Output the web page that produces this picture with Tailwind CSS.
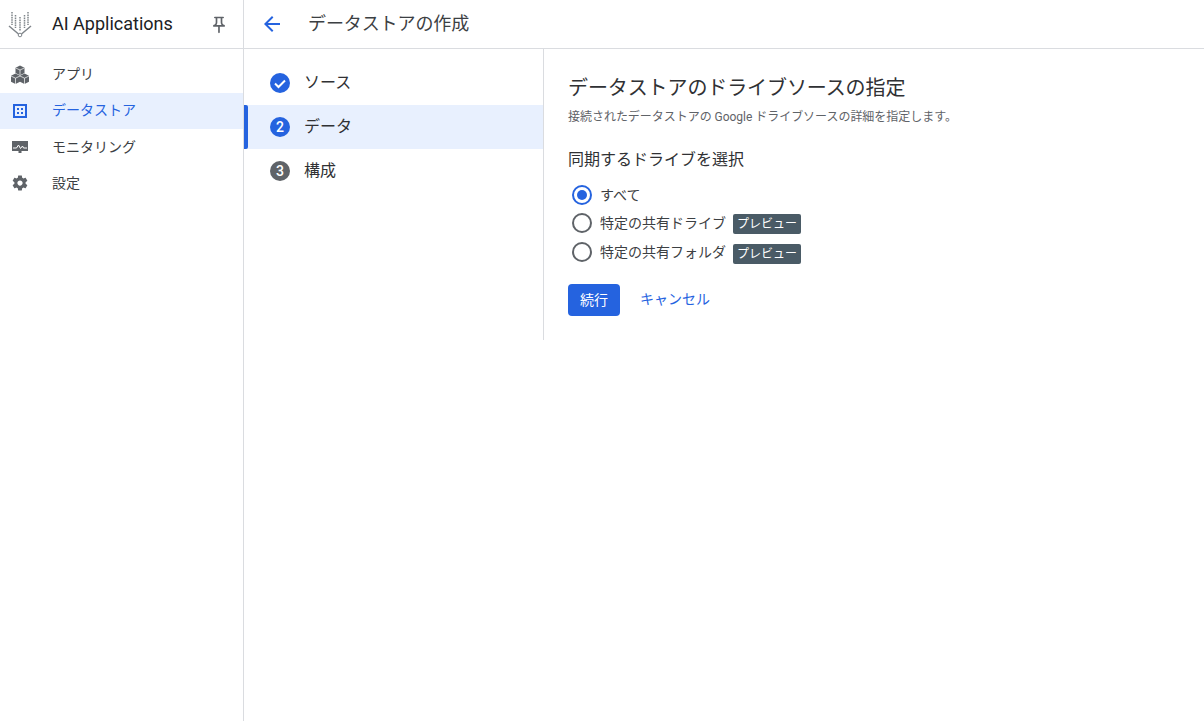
<!DOCTYPE html>
<html lang="ja">
<head>
    <meta charset="UTF-8">
    <title>データストアの作成</title>
    <script src="https://cdn.jsdelivr.net/npm/@tailwindcss/browser@4"></script>
</head>
<body class="bg-white h-[721px] overflow-hidden flex font-['Roboto','Noto_Sans_CJK_JP',sans-serif] text-[#303134]">
    <!-- サイドバー -->
    <aside class="w-[244px] h-full shrink-0 border-r border-[#dadce0]">
        <div class="h-[49px] border-b border-[#dadce0] flex items-center relative">
            <svg class="ml-[8px] w-[24px] h-[28px]" viewBox="0 0 24 28" fill="none">
                <g stroke="#80868b" stroke-width="1.500" stroke-dasharray="1.600 .8">
                    <path d="M4 2v13"/><path d="M7.500 5v13"/><path d="M12 7v14"/><path d="M16.500 5v13"/><path d="M20 2v13"/>
                </g>
                <path d="M1 16l9.500 8M23 16l-9.500 8" stroke="#80868b" stroke-width="1.500"/>
                <circle cx="12" cy="25" r="1.800" stroke="#80868b" stroke-width="1"/>
            </svg>
            <span class="ml-[20px] text-[18px] leading-none text-[#202124]">AI Applications</span>
            <svg class="absolute left-[209px] top-[15px] w-[20px] h-[20px]" viewBox="0 0 24 24" fill="#5f6368">
                <path d="M14 4v5c0 1.120.37 2.160 1 3H9c.65-.86 1-1.900 1-3V4h4m3-2H7c-.55 0-1 .45-1 1s.45 1 1 1h1v5c0 1.660-1.340 3-3 3v2h5.970v7l1 1 1-1v-7H19v-2c-1.660 0-3-1.340-3-3V4h1c.55 0 1-.45 1-1s-.45-1-1-1z"/>
            </svg>
        </div>
        <nav class="pt-[8px] text-[14px]">
            <a class="h-[36px] flex items-center text-[#3c4043]">
                <svg class="ml-[10px] w-[20px] h-[20px]" viewBox="0 0 20 20" fill="#5f6368">
                    <path d="M10 .5l4.500 2.200v5.300L10 10.200 5.500 8V2.700z"/><path d="M5.500 8.500l4.500 2.200v6L5.500 19 1 16.700v-6z"/><path d="M14.500 8.500l4.500 2.200v6L14.500 19 10 16.700v-6z"/>
                    <path d="M5.700 3l4.300 2 4.300-2M10 5v5M1 11l4.500 2.200L10 11M5.500 13.200V19M10 11l4.500 2.200L19 11M14.500 13.200V19" stroke="#fff" stroke-width=".7" fill="none"/>
                </svg>
                <span class="ml-[22px] -mt-[1px]">アプリ</span>
            </a>
            <a class="h-[36px] flex items-center bg-[#e8f0fe] text-[#2563df]">
                <svg class="ml-[13px] w-[14px] h-[14px]" viewBox="0 0 14 14" fill="#2563df">
                    <path fill-rule="evenodd" d="M0 0h14v14H0zM2 2v10h10V2z"/><path d="M4 4h2v2H4zM8 4h2v2H8zM4 8h2v2H4zM8 8h2v2H8z"/>
                </svg>
                <span class="ml-[25px] -mt-[1px]">データストア</span>
            </a>
            <a class="h-[36px] flex items-center text-[#3c4043]">
                <svg class="ml-[12px] w-[16px] h-[16px]" viewBox="0 0 16 16" fill="#5f6368">
                    <path d="M0 2h16v10H9.500v2h-3v-2H0z"/>
                    <path d="M1 9h3.500l2-3 2 3.500 2-2.500 1 2H15" stroke="#fff" stroke-width="1" fill="none"/>
                </svg>
                <span class="ml-[24px]">モニタリング</span>
            </a>
            <a class="h-[36px] flex items-center text-[#3c4043]">
                <svg class="ml-[11px] w-[18px] h-[18px]" viewBox="0 0 24 24" fill="#5f6368">
                    <path d="M19.430 12.980c.04-.32.07-.64.07-.98s-.03-.66-.07-.98l2.110-1.650c.19-.15.24-.42.12-.64l-2-3.460c-.12-.22-.39-.3-.61-.22l-2.490 1c-.52-.4-1.080-.73-1.690-.98l-.38-2.650C14.460 2.180 14.250 2 14 2h-4c-.25 0-.46.18-.49.42l-.38 2.650c-.61.25-1.170.59-1.690.98l-2.490-1c-.23-.09-.49 0-.61.22l-2 3.460c-.13.22-.07.49.12.64l2.110 1.650c-.04.32-.07.65-.07.98s.03.66.07.98l-2.110 1.650c-.19.15-.24.42-.12.64l2 3.460c.12.22.39.3.61.22l2.490-1c.52.4 1.080.73 1.690.98l.38 2.650c.03.24.24.42.49.42h4c.25 0 .46-.18.49-.42l.38-2.650c.61-.25 1.170-.59 1.690-.98l2.490 1c.23.09.49 0 .61-.22l2-3.460c.12-.22.07-.49-.12-.64l-2.110-1.650zM12 15.500c-1.930 0-3.500-1.570-3.500-3.500s1.570-3.500 3.500-3.500 3.500 1.570 3.500 3.500-1.570 3.500-3.500 3.500z"/>
                </svg>
                <span class="ml-[23px]">設定</span>
            </a>
        </nav>
    </aside>

    <main class="flex-1 min-w-0">
        <!-- ヘッダー -->
        <header class="h-[49px] border-b border-[#dadce0] flex items-center">
            <svg class="ml-[16px] w-[24px] h-[24px]" viewBox="0 0 24 24" fill="#2563df">
                <path d="M20 11H7.830l5.590-5.590L12 4l-8 8 8 8 1.410-1.410L7.830 13H20v-2z"/>
            </svg>
            <h1 class="ml-[24px] -mt-[2px] text-[18px] font-normal text-[#3c4043] tracking-[-0.1px]">データストアの作成</h1>
        </header>

        <div class="flex">
            <!-- ステップ -->
            <ol class="w-[300px] h-[291px] border-r border-[#dadce0] pt-[12px] text-[16px]">
                <li class="h-[44px] flex items-center pl-[26px]">
                    <svg class="w-[20px] h-[20px]" viewBox="0 0 20 20">
                        <circle cx="10" cy="10" r="10" fill="#2563df"/>
                        <path d="M5 10.500l3.500 3.500L15 7.500" stroke="#fff" stroke-width="2" fill="none"/>
                    </svg>
                    <span class="ml-[14px] -mt-[1px]">ソース</span>
                </li>
                <li class="h-[44px] flex items-center pl-[26px] bg-[#e8f0fe] relative">
                    <div class="absolute left-0 top-0 w-[4px] h-full bg-[#2563df] rounded-r-[2px]"></div>
                    <div class="w-[20px] h-[20px] rounded-full bg-[#2563df] text-white text-[14px] font-medium flex items-center justify-center">2</div>
                    <span class="ml-[14px] -mt-[1px]">データ</span>
                </li>
                <li class="h-[44px] flex items-center pl-[26px]">
                    <div class="w-[20px] h-[20px] rounded-full bg-[#5f6368] text-white text-[14px] font-medium flex items-center justify-center">3</div>
                    <span class="ml-[14px] -mt-[1px]">構成</span>
                </li>
            </ol>

            <!-- フォーム -->
            <section class="pl-[24px] pt-[25px]">
                <h2 class="text-[20px] leading-[28px] font-normal tracking-[-0.1px]">データストアのドライブソースの指定</h2>
                <p class="mt-[7px] text-[12px] leading-[16px] text-[#5f6368] tracking-[-0.03px]">接続されたデータストアの Google ドライブソースの詳細を指定します。</p>
                <h3 class="mt-[23px] text-[16px] leading-[24px] font-normal">同期するドライブを選択</h3>
                <div class="mt-[13px] pl-[4px] text-[14px] text-[#3c4043] flex flex-col">
                    <label class="h-[20px] flex items-center">
                        <span class="w-[20px] h-[20px] rounded-full border-2 border-[#2563df] flex items-center justify-center">
                            <span class="w-[10px] h-[10px] rounded-full bg-[#2563df]"></span>
                        </span>
                        <span class="ml-[8px]">すべて</span>
                    </label>
                    <label class="mt-[8px] h-[20px] flex items-center">
                        <span class="w-[20px] h-[20px] rounded-full border-2 border-[#5f6368]"></span>
                        <span class="ml-[8px]">特定の共有ドライブ</span>
                        <span class="ml-[7px] mt-[2px] h-[20px] px-[4px] rounded-[2px] bg-[#4a5b66] text-white text-[12px] leading-[20px]">プレビュー</span>
                    </label>
                    <label class="mt-[9px] h-[20px] flex items-center">
                        <span class="w-[20px] h-[20px] rounded-full border-2 border-[#5f6368]"></span>
                        <span class="ml-[8px]">特定の共有フォルダ</span>
                        <span class="ml-[7px] mt-[4px] h-[20px] px-[4px] rounded-[2px] bg-[#4a5b66] text-white text-[12px] leading-[20px]">プレビュー</span>
                    </label>
                </div>
                <div class="mt-[22px] flex items-center text-[14px]">
                    <button class="w-[52px] h-[32px] rounded-[4px] bg-[#2563df] text-white">続行</button>
                    <button class="ml-[20px] -mt-[2px] text-[#2563df]">キャンセル</button>
                </div>
            </section>
        </div>
    </main>
</body>
</html>
